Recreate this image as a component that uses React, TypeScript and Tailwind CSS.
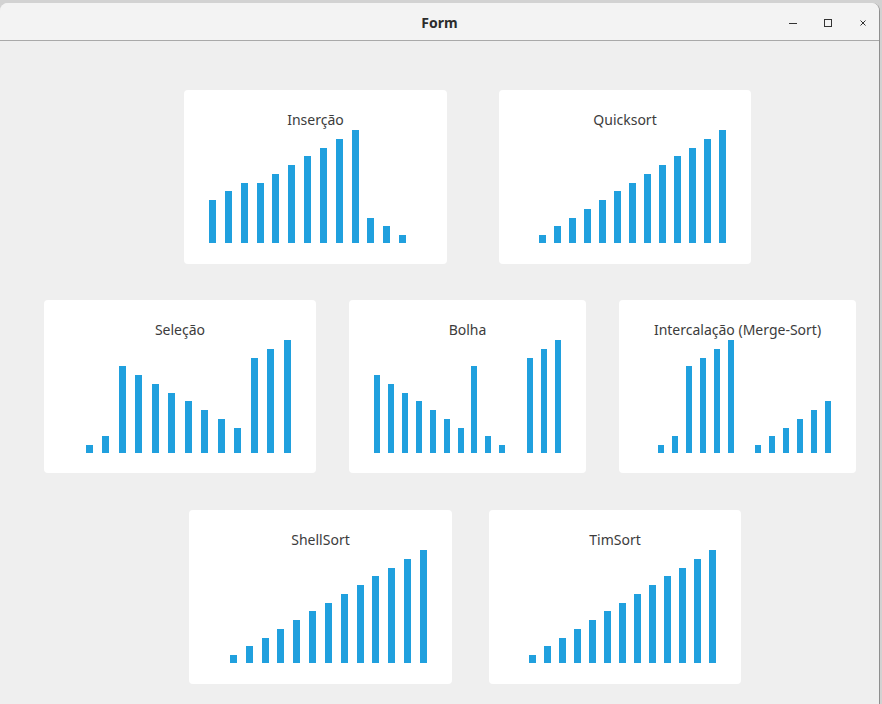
const font = { fontFamily: '"Noto Sans", "Open Sans", sans-serif' };

type Chart = { title: string; width: string; values: number[]; barW: string; pb: string };

const rows: { pl: string; gap: string; mt: string; charts: Chart[] }[] = [
  {
    pl: "pl-[184px]",
    gap: "gap-[52px]",
    mt: "mt-[49px]",
    charts: [
      { title: "Inserção", width: "w-[263px]", barW: "w-[7px]", pb: "pb-[21px]", values: [5, 6, 7, 7, 8, 9, 10, 11, 12, 13, 3, 2, 1, 0] },
      { title: "Quicksort", width: "w-[252px]", barW: "w-[7px]", pb: "pb-[21px]", values: [0, 1, 2, 3, 4, 5, 6, 7, 8, 9, 10, 11, 12, 13] },
    ],
  },
  {
    pl: "pl-[44px]",
    gap: "gap-[33px]",
    mt: "mt-[36px]",
    charts: [
      { title: "Seleção", width: "w-[272px]", barW: "w-[7px]", pb: "pb-[20px]", values: [0, 1, 2, 10, 9, 8, 7, 6, 5, 4, 3, 11, 12, 13] },
      { title: "Bolha", width: "w-[237px]", barW: "w-[6px]", pb: "pb-[20px]", values: [9, 8, 7, 6, 5, 4, 3, 10, 2, 1, 0, 11, 12, 13] },
      { title: "Intercalação (Merge-Sort)", width: "w-[237px]", barW: "w-[6px]", pb: "pb-[20px]", values: [0, 1, 2, 10, 11, 12, 13, 0, 1, 2, 3, 4, 5, 6] },
    ],
  },
  {
    pl: "pl-[189px]",
    gap: "gap-[37px]",
    mt: "mt-[37px]",
    charts: [
      { title: "ShellSort", width: "w-[263px]", barW: "w-[7px]", pb: "pb-[21px]", values: [0, 1, 2, 3, 4, 5, 6, 7, 8, 9, 10, 11, 12, 13] },
      { title: "TimSort", width: "w-[252px]", barW: "w-[7px]", pb: "pb-[21px]", values: [0, 1, 2, 3, 4, 5, 6, 7, 8, 9, 10, 11, 12, 13] },
    ],
  },
];

function ChartCard({ chart }: { chart: Chart }) {
  return (
    <div className={`${chart.width} ${chart.pb} flex flex-col rounded-[4px] bg-white pt-[21px]`}>
      <div className="h-[18px] text-center text-[14px] leading-[18px] text-[#3c3c3c]" style={font}>
        {chart.title}
      </div>
      <div className="flex h-[114px] items-end justify-between px-[25px]">
        {chart.values.map((v, i) => (
          <div
            key={i}
            className={`${chart.barW} bg-[#20a0de]`}
            style={{ height: v === 0 ? 0 : Math.round(v * 8.75 - 1) }}
          />
        ))}
      </div>
    </div>
  );
}

export default function App() {
  return (
    <div className="h-[704px] w-[882px] overflow-hidden bg-[#d2d2d2] pt-[3px]">
      <div className="flex h-[701px] w-[880px] flex-col overflow-hidden rounded-t-[8px] border-r border-[#8e8e8e] bg-[#efefef]">
        <div className="relative flex h-[38px] shrink-0 items-center justify-center border-b border-[#a9a9a9] bg-[#f3f3f3]">
          <span className="mt-[1px] text-[14px] font-bold text-[#2c2c2c]" style={font}>
            Form
          </span>
          <div className="absolute right-[11px] top-0 flex h-full items-center gap-[25px] pt-[2px] text-[#333]">
            <svg width="10" height="10" viewBox="0 0 10 10">
              <path d="M1 5.5h8" stroke="#333" strokeWidth="1" />
            </svg>
            <svg width="10" height="10" viewBox="0 0 10 10">
              <rect x="1.5" y="1.5" width="7" height="7" fill="none" stroke="#333" strokeWidth="1" />
            </svg>
            <svg width="10" height="10" viewBox="0 0 10 10">
              <path d="M2.5 2.5l5 5M7.5 2.5l-5 5" stroke="#333" strokeWidth="1" />
            </svg>
          </div>
        </div>
        <div className="flex flex-col">
          {rows.map((row, r) => (
            <div key={r} className={`flex ${row.pl} ${row.gap} ${row.mt}`}>
              {row.charts.map((c) => (
                <ChartCard key={c.title} chart={c} />
              ))}
            </div>
          ))}
        </div>
      </div>
    </div>
  );
}
